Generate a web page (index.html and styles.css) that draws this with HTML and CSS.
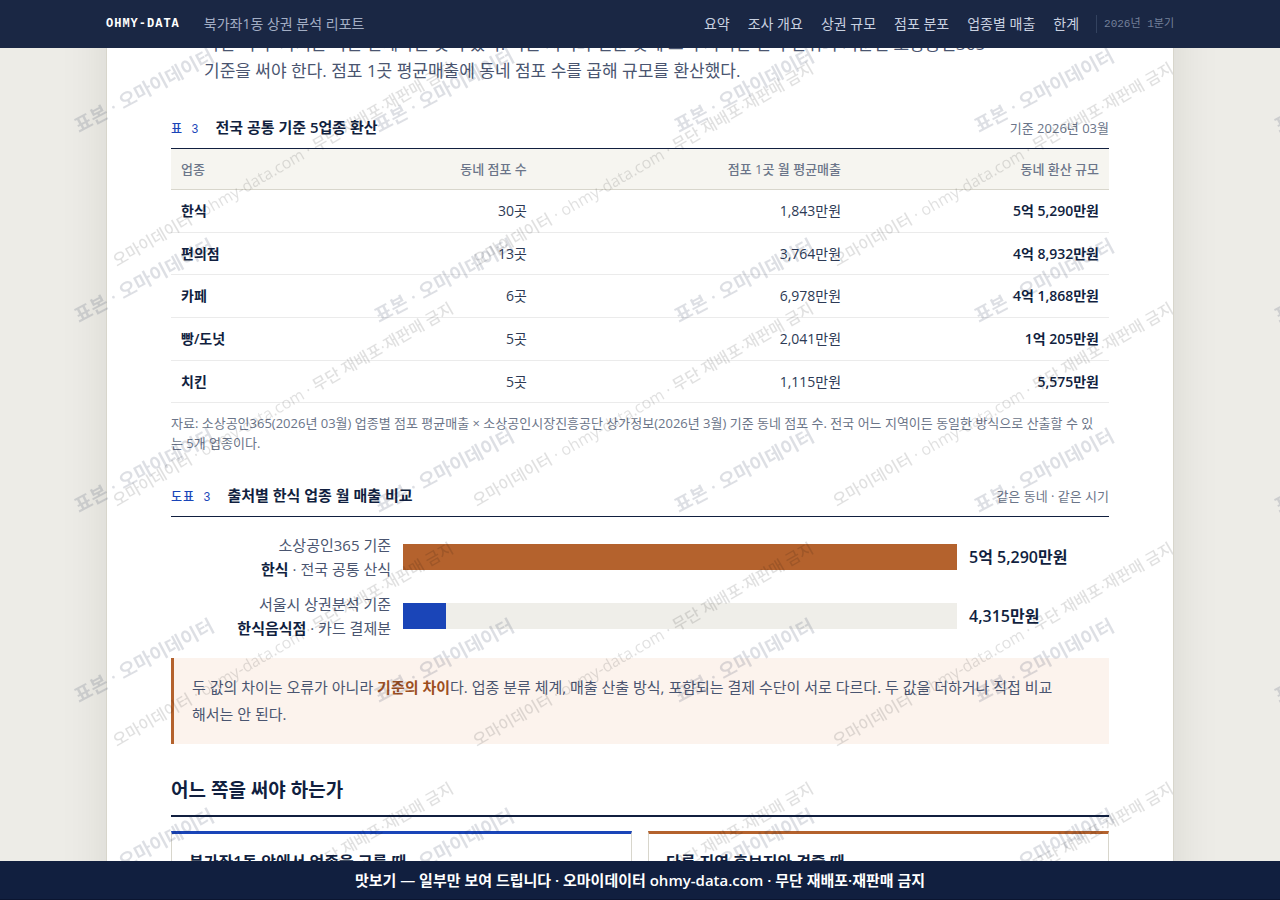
FILE: index.html
```html
<!DOCTYPE html>
<html lang="ko">
<head>
<meta charset="utf-8">
<meta name="viewport" content="width=device-width, initial-scale=1">
<title>북가좌1동 상권 분석 리포트</title>
<link rel="stylesheet" href="styles.css">
</head>
<body>
<header class="topbar">
  <div class="topbar-inner">
    <span class="brand">OHMY-DATA</span>
    <span class="report-name">북가좌1동 상권 분석 리포트</span>
    <nav class="nav" aria-label="목차">
      <a href="#summary">요약</a>
      <a href="#overview">조사 개요</a>
      <a href="#size">상권 규모</a>
      <a href="#stores">점포 분포</a>
      <a href="#sales">업종별 매출</a>
      <a href="#limits">한계</a>
    </nav>
    <span class="period">2026년 1분기</span>
  </div>
</header>

<main class="sheet">
  <p class="lead">다만 이 두 가지는 다른 단계라는 뜻이 있다. 다른 지역과 견준 곳에 쓰이 지려면 전국 단위의 기준인 소상공인365<br>기준을 써야 한다. 점포 1곳 평균매출에 동네 점포 수를 곱해 규모를 환산했다.</p>

  <section class="exhibit" id="sales">
    <div class="exhibit-head">
      <span class="exhibit-no">표 3</span>
      <h3 class="exhibit-title">전국 공통 기준 5업종 환산</h3>
      <span class="exhibit-meta">기준 2026년 03월</span>
    </div>
    <table class="data">
      <colgroup><col class="c-name"><col class="c-count"><col class="c-avg"><col class="c-total"></colgroup>
      <thead>
        <tr><th scope="col">업종</th><th scope="col">동네 점포 수</th><th scope="col">점포 1곳 월 평균매출</th><th scope="col">동네 환산 규모</th></tr>
      </thead>
      <tbody>
        <tr><th scope="row">한식</th><td>30곳</td><td>1,843만원</td><td class="total">5억 5,290만원</td></tr>
        <tr><th scope="row">편의점</th><td>13곳</td><td>3,764만원</td><td class="total">4억 8,932만원</td></tr>
        <tr><th scope="row">카페</th><td>6곳</td><td>6,978만원</td><td class="total">4억 1,868만원</td></tr>
        <tr><th scope="row">빵/도넛</th><td>5곳</td><td>2,041만원</td><td class="total">1억 205만원</td></tr>
        <tr><th scope="row">치킨</th><td>5곳</td><td>1,115만원</td><td class="total">5,575만원</td></tr>
      </tbody>
    </table>
    <p class="source">자료: 소상공인365(2026년 03월) 업종별 점포 평균매출 × 소상공인시장진흥공단 상가정보(2026년 3월) 기준 동네 점포 수. 전국 어느 지역이든 동일한 방식으로 산출할 수 있는 5개 업종이다.</p>
  </section>

  <section class="exhibit">
    <div class="exhibit-head">
      <span class="exhibit-no">도표 3</span>
      <h3 class="exhibit-title">출처별 한식 업종 월 매출 비교</h3>
      <span class="exhibit-meta">같은 동네 · 같은 시기</span>
    </div>
    <div class="bars">
      <div class="bar-row">
        <div class="bar-label">소상공인365 기준<br><b>한식</b> · 전국 공통 산식</div>
        <div class="bar-track"><div class="bar-fill bar-rust" style="width:100%"></div></div>
        <div class="bar-value">5억 5,290만원</div>
      </div>
      <div class="bar-row">
        <div class="bar-label">서울시 상권분석 기준<br><b>한식음식점</b> · 카드 결제분</div>
        <div class="bar-track"><div class="bar-fill bar-blue" style="width:7.8%"></div></div>
        <div class="bar-value">4,315만원</div>
      </div>
    </div>
    <p class="callout">두 값의 차이는 오류가 아니라 <b>기준의 차이</b>다. 업종 분류 체계, 매출 산출 방식, 포함되는 결제 수단이 서로 다르다. 두 값을 더하거나 직접 비교해서는 안 된다.</p>
  </section>

  <section class="choice">
    <h2 class="choice-title">어느 쪽을 써야 하는가</h2>
    <div class="cards">
      <article class="card card-blue"><h4>북가좌1동 안에서 업종을 고를 때</h4></article>
      <article class="card card-rust"><h4>다른 지역 후보지와 견줄 때</h4></article>
    </div>
  </section>

  <svg class="mark-sheet" aria-hidden="true">
    <defs>
      <pattern id="mark-notice" width="360" height="240" patternUnits="userSpaceOnUse">
        <text class="mark-notice-text" transform="translate(10 27) rotate(-30)">오마이데이터 · ohmy-data.com · 무단 재배포·재판매 금지</text>
        <text class="mark-notice-text" transform="translate(10 267) rotate(-30)">오마이데이터 · ohmy-data.com · 무단 재배포·재판매 금지</text>
      </pattern>
    </defs>
    <rect width="100%" height="100%" fill="url(#mark-notice)"/>
  </svg>
</main>

<svg class="mark-screen" aria-hidden="true">
  <defs>
    <pattern id="mark-sample" width="300" height="190" patternUnits="userSpaceOnUse">
      <text class="mark-sample-text" transform="translate(79 133) rotate(-28)">표본 · 오마이데이터</text>
    </pattern>
  </defs>
  <rect width="100%" height="100%" fill="url(#mark-sample)"/>
</svg>

<footer class="notice">맛보기 — 일부만 보여 드립니다 · 오마이데이터 ohmy-data.com · 무단 재배포·재판매 금지</footer>
</body>
</html>
```

FILE: styles.css
```css
:root {
  --navy: #111f3f;
  --text: #4a5570;
  --muted: #6b7589;
  --blue: #1a45b8;
  --rust: #b4622d;
  --rule: #d8d6cc;
  --sans: "Open Sans", "Noto Sans CJK KR", sans-serif;
  --mono: "Liberation Mono", "Noto Sans CJK KR", monospace;
}

* { box-sizing: border-box; }

body {
  margin: 0;
  background: #edece7;
  color: var(--text);
  font-family: var(--sans);
  font-size: 14px;
}

h2, h3, h4, p { margin: 0; }

.topbar {
  position: fixed;
  inset: 0 0 auto;
  z-index: 20;
  height: 48px;
  background: #1a2744;
}

.topbar-inner {
  display: flex;
  align-items: center;
  height: 100%;
  max-width: 1068px;
  margin: 0 auto;
}

.brand {
  margin-right: 24px;
  color: #fff;
  font: bold 12px var(--mono);
  letter-spacing: 1px;
}

.report-name {
  padding-bottom: 3px;
  color: #a3aec4;
}

.nav {
  display: flex;
  gap: 18px;
  margin-left: auto;
  padding-bottom: 3px;
}

.nav a {
  color: #c9d1e0;
  text-decoration: none;
}

.period {
  margin-left: 17px;
  padding-left: 7px;
  border-left: 1px solid #33425f;
  color: #74809a;
  font: 11px/18px var(--mono);
}

.sheet {
  position: relative;
  max-width: 1068px;
  margin: 0 auto;
  padding: 30px 64px 64px;
  background: #fff;
  border: solid var(--rule);
  border-width: 0 1px;
  box-shadow: 0 0 44px rgba(40, 40, 20, .1);
}

.lead {
  padding-left: 33px;
  font-size: 17px;
  line-height: 27px;
}

.exhibit { margin-top: 31px; }
.exhibit + .exhibit { margin-top: 30px; }

.exhibit-head {
  display: flex;
  align-items: baseline;
  padding-bottom: 6px;
  border-bottom: 1px solid var(--navy);
  line-height: 24px;
}

.exhibit-no {
  margin-right: 16px;
  color: var(--blue);
  font-family: var(--mono);
  font-size: 12px;
  font-weight: 500;
  letter-spacing: 1px;
}

.exhibit-title {
  color: var(--navy);
  font-size: 15px;
  font-weight: 600;
}

.exhibit-meta {
  margin-left: auto;
  color: var(--muted);
  font-size: 13px;
}

.data {
  width: 100%;
  border-collapse: collapse;
  table-layout: fixed;
}

.c-name { width: 14%; }
.c-count { width: 25%; }
.c-avg { width: 33.5%; }
.c-total { width: 27.5%; }

.data th, .data td {
  padding: 10px;
  border-bottom: 1px solid #ebebeb;
  line-height: 1.55;
  text-align: right;
}

.data th:first-child { text-align: left; }

.data thead th {
  background: #f6f5f0;
  border-bottom-color: var(--rule);
  color: var(--muted);
  font-size: 13px;
  font-weight: 500;
  line-height: 20px;
}

.data tbody th, .data .total {
  color: var(--navy);
  font-weight: 600;
}

.data td { color: #2d3a55; }

.source {
  padding: 10px 8px 0 0;
  color: var(--muted);
  font-size: 13px;
  line-height: 20px;
}

.bars {
  display: grid;
  gap: 11px;
  padding: 16px 0 18px;
}

.bar-row {
  display: grid;
  grid-template-columns: 220px minmax(0, 1fr) 140px;
  gap: 12px;
  align-items: center;
}

.bar-label {
  font-size: 15px;
  line-height: 24px;
  text-align: right;
}

.bar-label b { color: var(--navy); font-weight: 600; }

.bar-track { height: 26px; background: #efeee9; }
.bar-fill { height: 100%; }
.bar-rust { background: var(--rust); }
.bar-blue { background: var(--blue); }

.bar-value {
  color: var(--navy);
  font-size: 16px;
  font-weight: 600;
  line-height: 24px;
}

.callout {
  padding: 16px 48px 16px 18px;
  background: #fcf3ed;
  border-left: 3px solid var(--rust);
  font-size: 15px;
  line-height: 27px;
}

.callout b { color: #9c4f1f; font-weight: 600; }

.choice { margin-top: 32px; }

.choice-title {
  padding-bottom: 11px;
  border-bottom: 2px solid var(--navy);
  color: var(--navy);
  font-size: 19px;
  font-weight: 600;
  line-height: 28px;
}

.cards {
  display: grid;
  grid-template-columns: 1fr 1fr;
  gap: 16px;
  margin-top: 14px;
}

.card {
  min-height: 120px;
  padding: 16px 17px;
  border: 1px solid var(--rule);
  border-top-width: 3px;
}

.card-blue { border-top-color: var(--blue); }
.card-rust { border-top-color: var(--rust); }

.card h4 {
  color: var(--navy);
  font-size: 16px;
  font-weight: 600;
  line-height: 24px;
}

.mark-sheet {
  position: absolute;
  inset: 0;
  width: 100%;
  height: 100%;
  pointer-events: none;
}

.mark-screen {
  position: fixed;
  inset: 0;
  z-index: 10;
  width: 100%;
  height: 100%;
  pointer-events: none;
}

.mark-notice-text {
  fill: #000;
  fill-opacity: .12;
  font-size: 16px;
  font-weight: 500;
}

.mark-sample-text {
  fill: #111f3f;
  fill-opacity: .14;
  font-size: 19px;
  font-weight: 600;
}

.notice {
  position: fixed;
  inset: auto 0 0;
  z-index: 20;
  padding: 9px 16px;
  background: var(--navy);
  border-bottom: 1px solid #0b1530;
  color: #fff;
  font-size: 15px;
  font-weight: 600;
  line-height: 20px;
  text-align: center;
}
```
